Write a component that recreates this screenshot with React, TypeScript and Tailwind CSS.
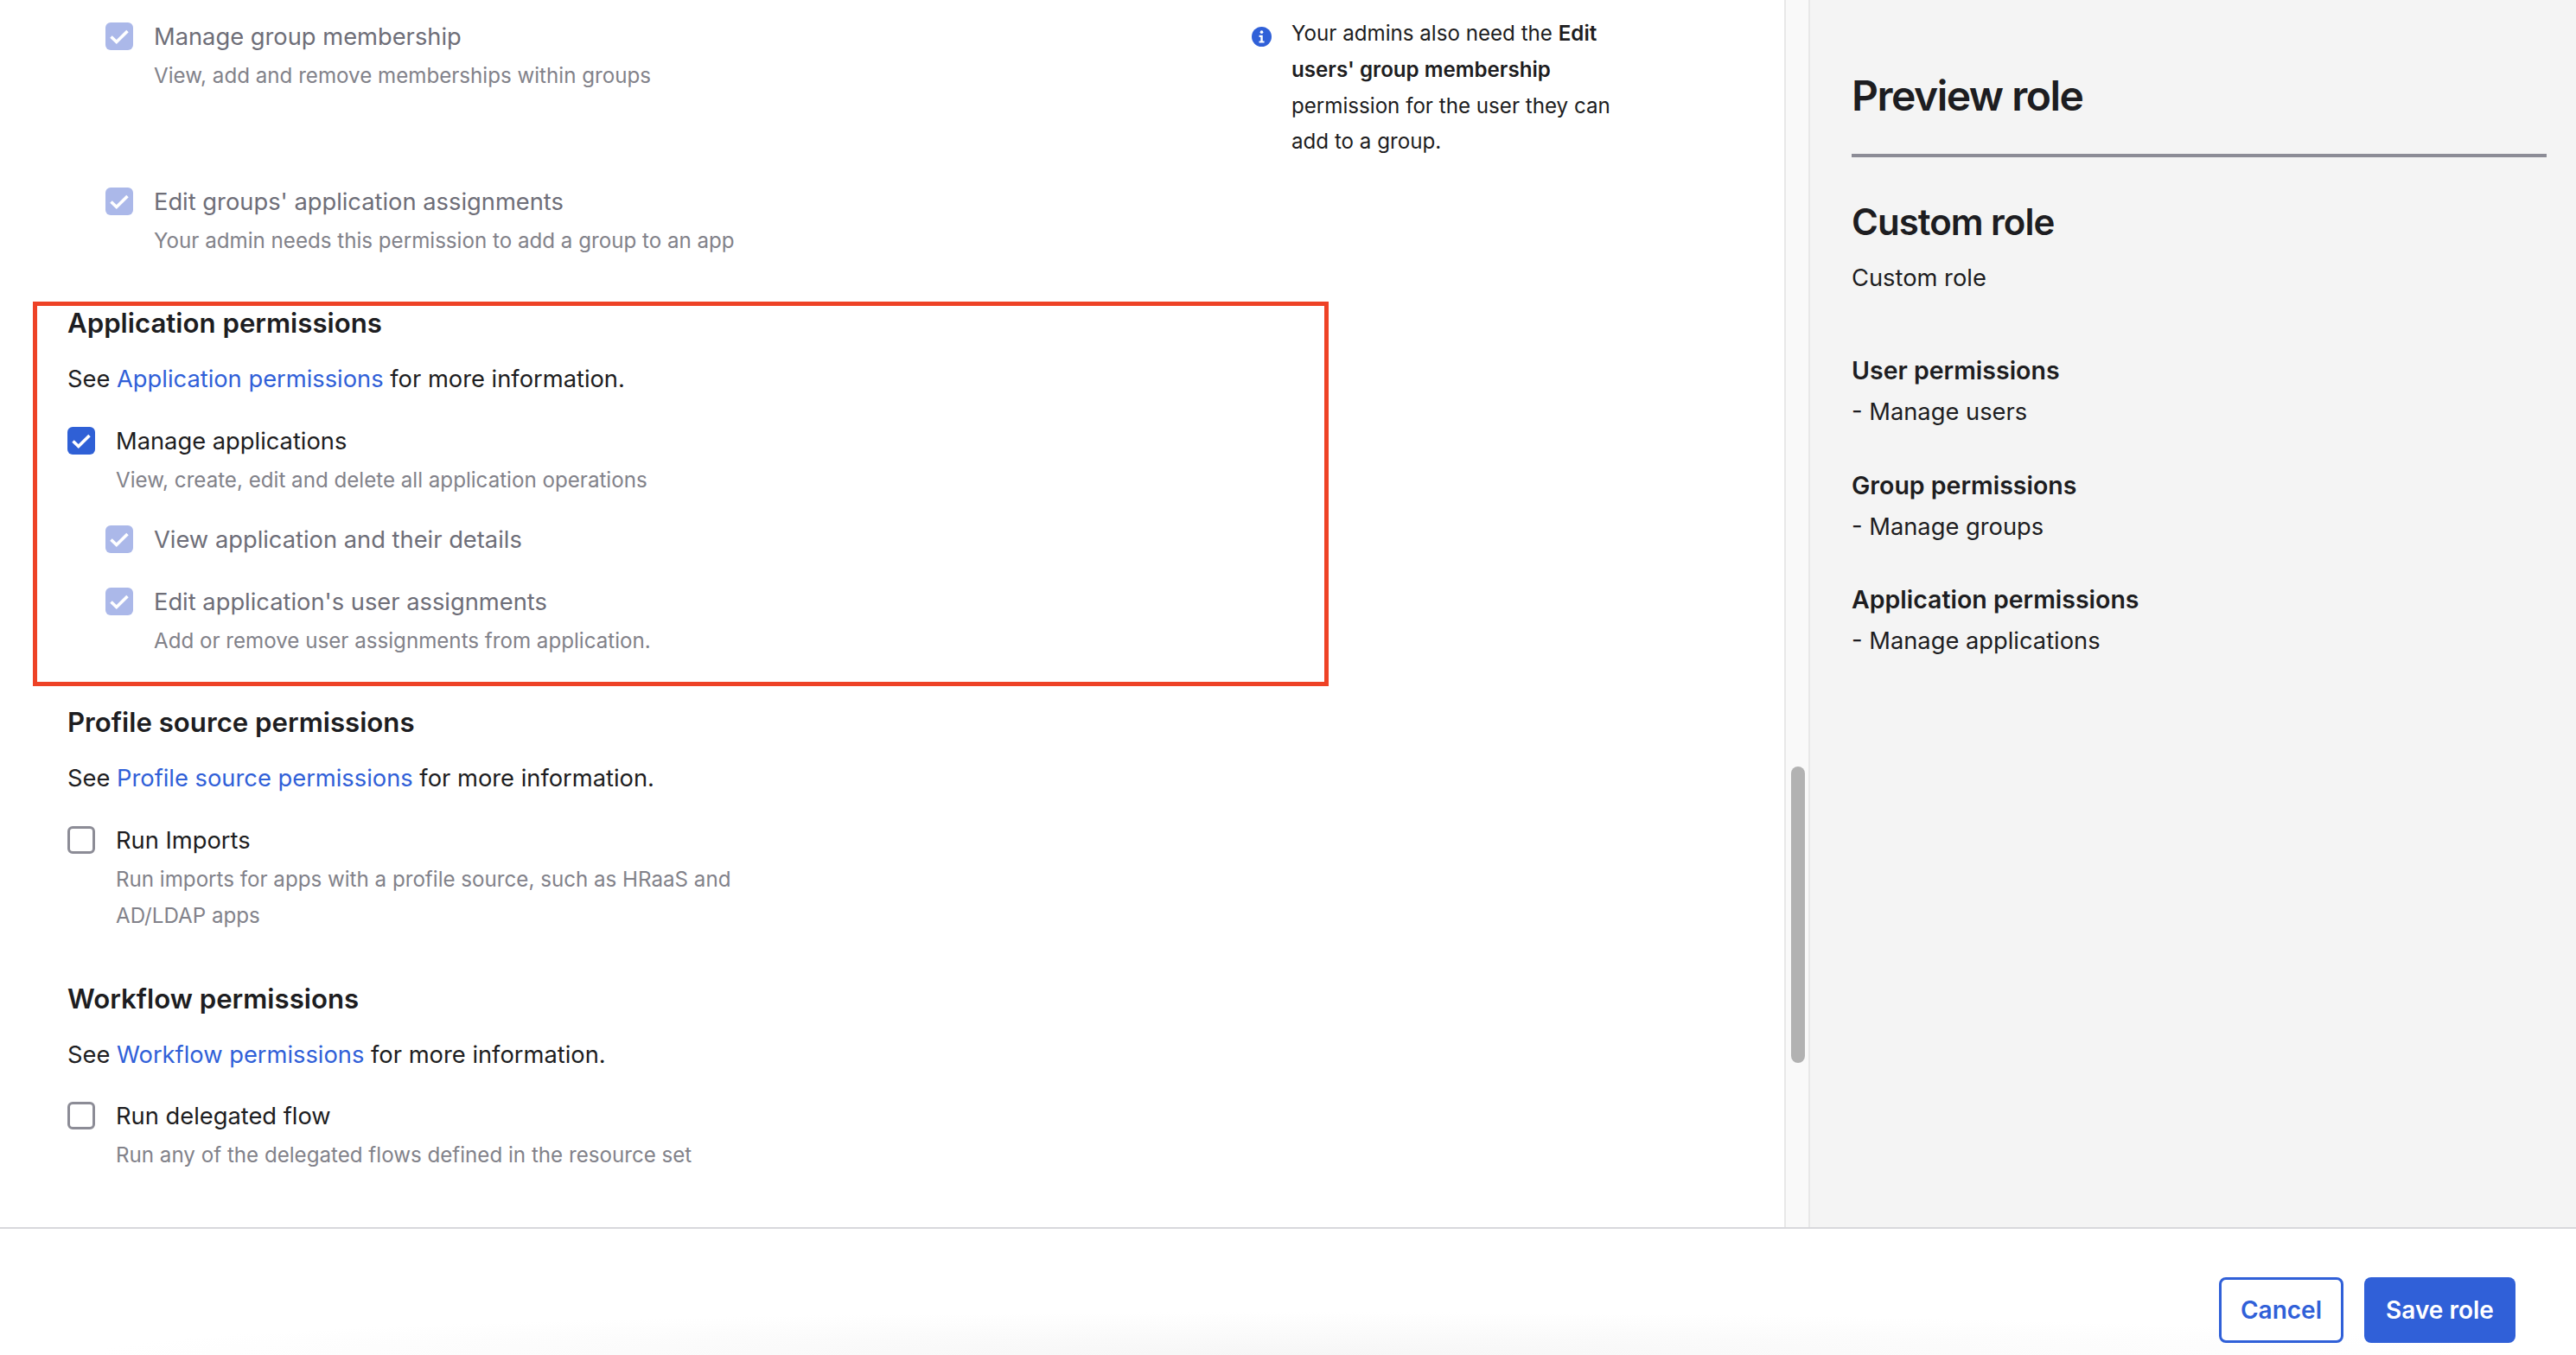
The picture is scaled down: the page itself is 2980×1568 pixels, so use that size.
import React from "react";

const Check = () => (
  <svg viewBox="0 0 32 32" className="w-[32px] h-[32px] block" fill="none">
    <path d="M6.5 16.5 L12.8 22.5 L25.5 10" stroke="#fff" strokeWidth="3.6" />
  </svg>
);

function Box({ state }: { state: "on" | "off" | "dis" }) {
  if (state === "off")
    return <div className="w-[32px] h-[32px] shrink-0 rounded-[6px] border-[3px] border-[#8c8c96] bg-white" />;
  return (
    <div className={"w-[32px] h-[32px] shrink-0 rounded-[6px] " + (state === "on" ? "bg-[#2f60d6]" : "bg-[#abb8e9]")}>
      <Check />
    </div>
  );
}

function Row({ state, label, hint, className }: { state: "on" | "off" | "dis"; label: string; hint?: React.ReactNode; className?: string }) {
  const dis = state === "dis";
  return (
    <div className={"flex " + (className ?? "")}>
      <Box state={state} />
      <div className="ml-[24px] pt-[1px]">
        <div className={"text-[27.3px] leading-[32px] " + (dis ? "text-[#6e6e78]" : "text-[#1d1d21]")}>{label}</div>
        {hint && <div className="mt-[8px] text-[24.15px] leading-[42px] text-[#82828a] w-[780px]">{hint}</div>}
      </div>
    </div>
  );
}

function SectionHead({ title, className }: { title: string; className?: string }) {
  return (
    <div className={className}>
      <div className="text-[31.2px] leading-[40px] font-semibold text-[#1d1d21]">{title}</div>
      <div className="mt-[25px] text-[27.3px] leading-[40px] text-[#1d1d21]">
        See <span className="text-[#3060d8]">{title}</span> for more information.
      </div>
    </div>
  );
}

function PreviewGroup({ title, item, className }: { title: string; item: string; className?: string }) {
  return (
    <div className={className}>
      <div className="text-[28.5px] leading-[40px] font-semibold text-[#1d1d21]">{title}</div>
      <div className="mt-[8px] text-[27.3px] leading-[40px] text-[#1d1d21]">- {item}</div>
    </div>
  );
}

export default function App() {
  return (
    <div className="w-[2980px] h-[1568px] flex flex-col overflow-hidden bg-white font-['Inter',sans-serif]">
      <div className="flex-1 min-h-0 flex">
        {/* scrolling form */}
        <div className="w-[2064px] shrink-0 overflow-hidden pl-[78px] pt-[26px]">
          <div className="flex ml-[44px]">
            <div className="w-[1326px] shrink-0">
              <Row state="dis" label="Manage group membership" hint="View, add and remove memberships within groups" />
              <Row
                className="mt-[108px]"
                state="dis"
                label="Edit groups' application assignments"
                hint="Your admin needs this permission to add a group to an app"
              />
            </div>
            <div className="flex">
              <svg viewBox="0 0 24 24" className="w-[23px] h-[23px] mt-[5px] shrink-0">
                <circle cx="12" cy="12" r="12" fill="#3060d8" />
                <circle cx="12" cy="6.4" r="1.9" fill="#fff" />
                <path d="M9 10.2h4.3v7h1.9v2.2H8.9v-2.2h1.9v-4.8H9z" fill="#fff" />
              </svg>
              <div className="ml-[23px] -mt-[8px] w-[395px] text-[24.15px] leading-[41.8px] text-[#1d1d21]">
                Your admins also need the <b className="font-semibold">Edit users' group membership</b> permission for the user they can add to a group.
              </div>
            </div>
          </div>

          <div className="relative mt-[54px]">
            <div className="absolute left-[-40px] top-[-5px] w-[1499px] h-[445px] border-[5px] border-[#ee4226]" />
            <SectionHead title="Application permissions" />
            <Row
              className="mt-[35px]"
              state="on"
              label="Manage applications"
              hint="View, create, edit and delete all application operations"
            />
            <div className="ml-[44px]">
              <Row className="mt-[31px]" state="dis" label="View application and their details" />
              <Row
                className="mt-[39px]"
                state="dis"
                label="Edit application's user assignments"
                hint="Add or remove user assignments from application."
              />
            </div>
          </div>

          <SectionHead className="mt-[53px]" title="Profile source permissions" />
          <Row
            className="mt-[35px]"
            state="off"
            label="Run Imports"
            hint={
              <>
                Run imports for apps with a profile source, such as HRaaS and
                <br />
                AD/LDAP apps
              </>
            }
          />

          <SectionHead className="mt-[55px]" title="Workflow permissions" />
          <Row
            className="mt-[34px]"
            state="off"
            label="Run delegated flow"
            hint="Run any of the delegated flows defined in the resource set"
          />
        </div>

        {/* scrollbar gutter */}
        <div className="w-[30px] shrink-0 bg-[#f9f9f9] border-x-2 border-[#e8e8e8] pt-[887px] pl-[6px] pr-[4px]">
          <div className="h-[343px] rounded-full bg-[#b2b2b2]" />
        </div>

        {/* preview panel */}
        <div className="flex-1 bg-[#f4f4f4] pl-[48px] pr-[34px] pt-[79px]">
          <div className="text-[48px] leading-[64px] tracking-[-1.5px] font-semibold text-[#1d1d21] pb-[35px] border-b-4 border-[#8c8c96]">Preview role</div>
          <div className="mt-[47px] text-[42px] leading-[56px] tracking-[-1px] font-semibold text-[#1d1d21]">Custom role</div>
          <div className="mt-[17px] text-[27.3px] leading-[40px] text-[#1d1d21]">Custom role</div>
          <PreviewGroup className="mt-[67px]" title="User permissions" item="Manage users" />
          <PreviewGroup className="mt-[45px]" title="Group permissions" item="Manage groups" />
          <PreviewGroup className="mt-[44px]" title="Application permissions" item="Manage applications" />
        </div>
      </div>

      {/* footer */}
      <div className="h-[148px] shrink-0 border-t-2 border-[#d8d8dc] flex justify-end items-start gap-[24px] pt-[56px] pr-[70px] bg-[radial-gradient(ellipse_1400px_50px_at_1500px_100%,#f6f6f6,#ffffff)]">
        <button className="w-[144px] h-[76px] rounded-[8px] border-[3px] border-[#3060d8] bg-white text-[28px] font-semibold text-[#3060d8]">Cancel</button>
        <button className="w-[175px] h-[76px] rounded-[8px] bg-[#3060d8] text-[28px] font-semibold text-white">Save role</button>
      </div>
    </div>
  );
}
